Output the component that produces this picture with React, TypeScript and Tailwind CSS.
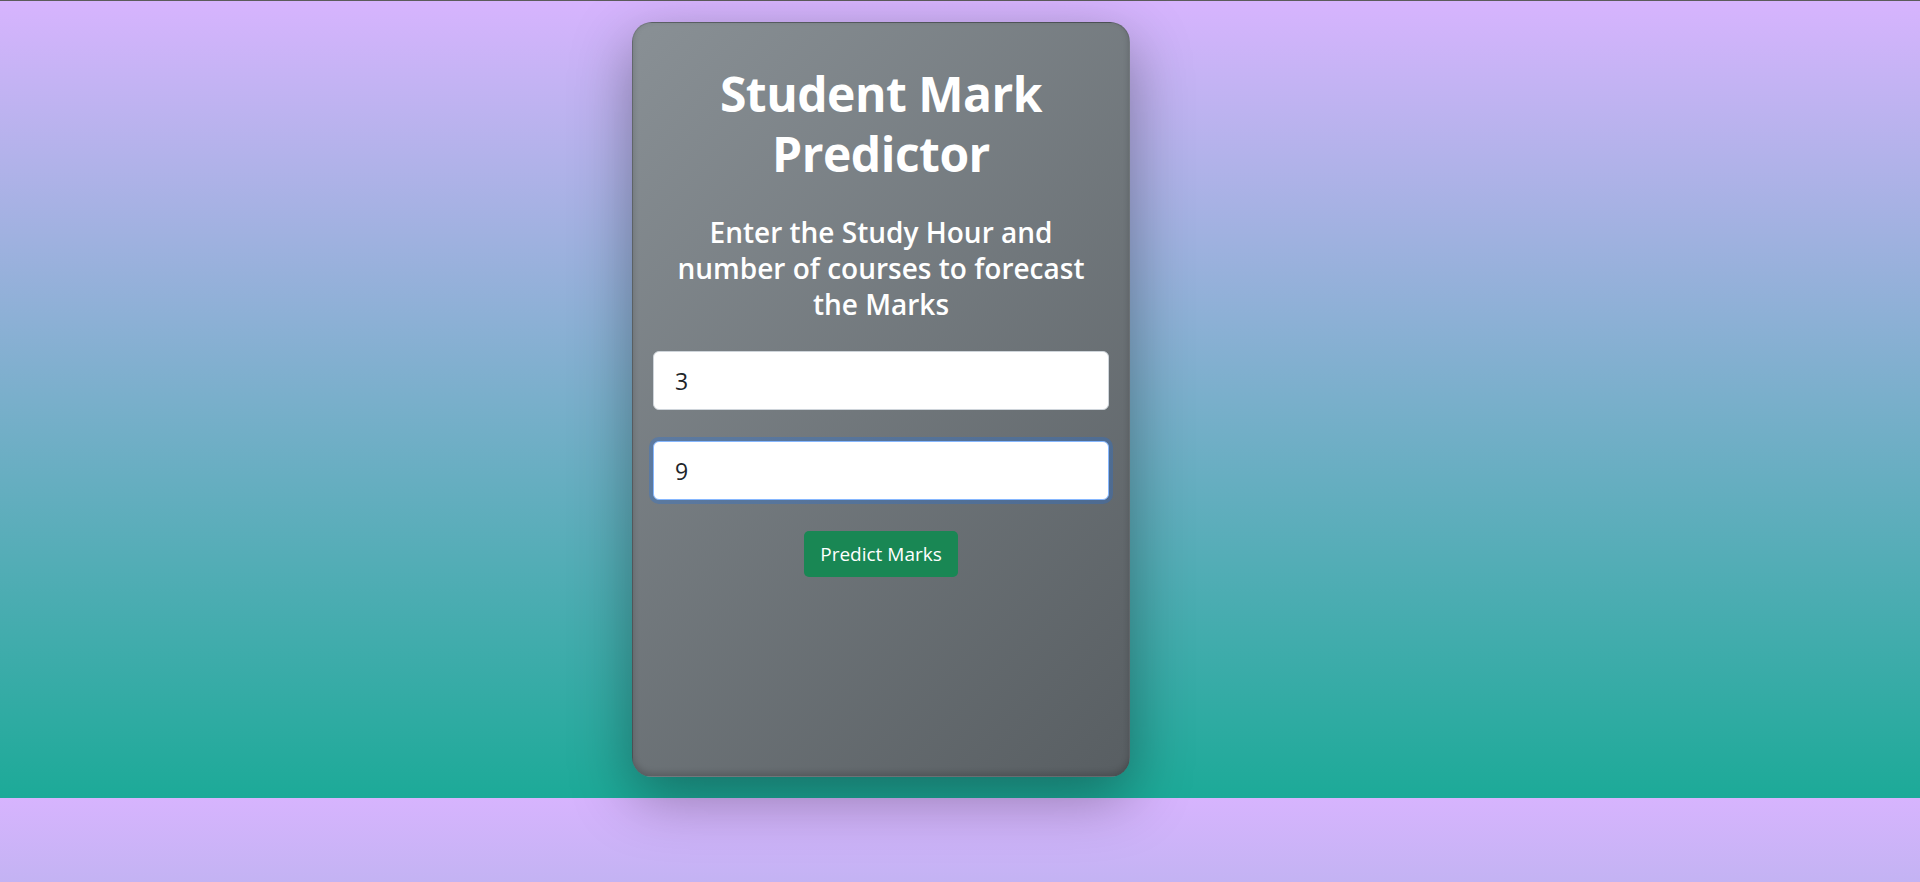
import { useState } from 'react'

export default function App() {
  const [hours, setHours] = useState('3')
  const [courses, setCourses] = useState('9')

  return (
    <div className="min-h-screen border-t border-[#5c5c5c] bg-[linear-gradient(to_bottom,#d7b4fe,#1caa98)] bg-[length:100%_797px] bg-repeat-y font-['Open_Sans','Noto_Sans',sans-serif]">
      <div
        className="ml-[632px] mt-[21px] w-[498px] h-[755px] rounded-[20px] border border-black/15 bg-[linear-gradient(135deg,#899095,#585e62)] px-5 text-center shadow-[0_20px_60px_rgba(0,0,0,0.35),inset_0_-3px_6px_rgba(0,0,0,0.18)]"
      >
        <h1 className="mt-[41px] text-[48px] leading-[60px] font-bold text-white tracking-[-0.5px]">
          Student Mark
          <br />
          Predictor
        </h1>
        <h3 className="mt-[30px] text-[28px] leading-[36px] font-semibold text-white">
          Enter the Study Hour and
          <br />
          number of courses to forecast
          <br />
          the Marks
        </h3>

        <input
          type="number"
          value={hours}
          onChange={e => setHours(e.target.value)}
          className="mt-[29px] block w-full h-[59px] rounded-[6px] border border-[#ced4da] bg-white px-[21px] text-[23px] text-[#212529] outline-none"
        />
        <input
          type="number"
          value={courses}
          onChange={e => setCourses(e.target.value)}
          className="mt-[31px] block w-full h-[59px] rounded-[6px] border border-[#86b7fe] bg-white px-[21px] text-[23px] text-[#212529] outline-none shadow-[0_0_0_4px_rgba(13,110,253,0.25)]"
        />

        <button className="mt-[31px] h-[46px] rounded-[5px] bg-[#198754] px-4 text-[19px] text-white">
          Predict Marks
        </button>
      </div>
    </div>
  )
}
